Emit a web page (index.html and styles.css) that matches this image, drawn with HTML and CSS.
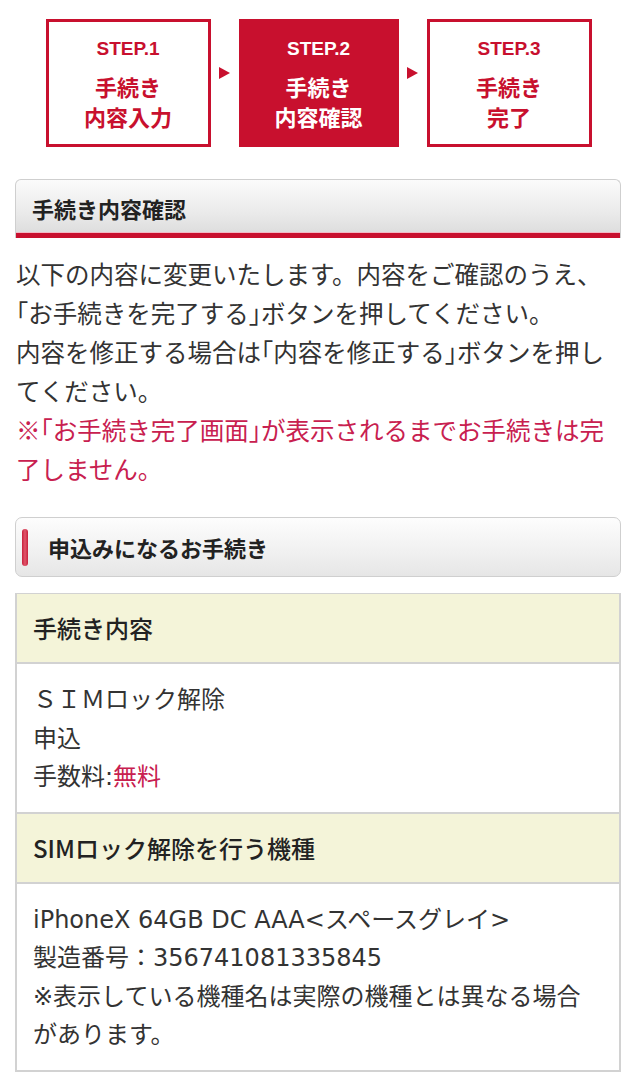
FILE: index.html
```html
<!DOCTYPE html>
<html lang="ja">
<head>
<meta charset="utf-8">
<link rel="stylesheet" href="styles.css">
</head>
<body>
<div class="steps">
  <div class="step">
    <div class="step-no">STEP.1</div>
    <div class="step-label">手続き<br>内容入力</div>
  </div>
  <div class="arrow"></div>
  <div class="step active">
    <div class="step-no">STEP.2</div>
    <div class="step-label">手続き<br>内容確認</div>
  </div>
  <div class="arrow"></div>
  <div class="step">
    <div class="step-no">STEP.3</div>
    <div class="step-label">手続き<br>完了</div>
  </div>
</div>

<h2 class="title">手続き内容確認</h2>

<p class="lead">以下の内容に変更いたします。内容をご確認のうえ、<span class="hb">「</span>お手続きを完了する<span class="hb">」</span>ボタンを押してください。<br>内容を修正する場合は<span class="hb">「</span>内容を修正する<span class="hb">」</span>ボタンを押してください。<br><span class="red">※<span class="hb">「</span>お手続き完了画面<span class="hb">」</span>が表示されるまでお手続きは完了しません。</span></p>

<h3 class="subtitle"><span class="bar"></span>申込みになるお手続き</h3>

<div class="table">
  <div class="th">手続き内容</div>
  <div class="td">ＳＩＭロック解除<br>申込<br>手数料:<span class="red">無料</span></div>
  <div class="th">SIMロック解除を行う機種</div>
  <div class="td">iPhoneX 64GB DC AAA&lt;スペースグレイ&gt;<br>製造番号：356741081335845<br>※表示している機種名は実際の機種とは異なる場合があります。</div>
</div>
</body>
</html>
```

FILE: styles.css
```css
* { box-sizing: border-box; }
body {
  margin: 0;
  background: #fff;
  color: #333;
  font-family: "Noto Sans CJK JP", "Noto Sans", sans-serif;
}
.steps {
  display: flex;
  justify-content: center;
  align-items: center;
  padding-top: 19px;
}
.step {
  width: 165px;
  height: 128px;
  border: 3px solid #c8102e;
  color: #c8102e;
  text-align: center;
  display: flex;
  flex-direction: column;
  align-items: center;
  padding-top: 16px;
}
.step.active {
  background: #c8102e;
  color: #fff;
  width: 160px;
}
.step-no {
  font-family: "Liberation Sans", Arial, sans-serif;
  font-weight: 700;
  font-size: 19px;
  line-height: 22px;
}
.step-label {
  font-weight: 700;
  font-size: 22px;
  line-height: 30px;
  margin-top: 11px;
}
.arrow {
  width: 28px;
  height: 12px;
  position: relative;
  margin-top: -20px;
}
.arrow::before {
  content: "";
  position: absolute;
  left: 8px;
  top: 0;
  border-left: 11px solid #c8102e;
  border-top: 6px solid transparent;
  border-bottom: 6px solid transparent;
}
.title {
  margin: 32px 16px 0 15px;
  height: 59px;
  border: 1px solid #cfcfcf;
  border-bottom: none;
  border-radius: 6px 6px 0 0;
  background: linear-gradient(#fbfbfb, #e9e9e9 60%, #dadada);
  box-shadow: inset 0 -5px 0 #c8102e, inset 0 -6px 0 #f3b9c4;
  font-size: 22px;
  font-weight: 700;
  color: #222;
  line-height: 26px;
  padding: 15px 0 0 16px;
}
.lead {
  margin: 16px 16px 0 16px;
  font-size: 24.5px;
  line-height: 39px;
  color: #333;
}
.hb { font-feature-settings: "halt"; }
.red { color: #c8204f; }
.subtitle {
  margin: 29px 16px 0 15px;
  height: 60px;
  border: 1px solid #cfcfcf;
  border-radius: 7px;
  background: linear-gradient(#fdfdfd, #f0f0f0 60%, #e6e6e6);
  font-size: 22px;
  font-weight: 700;
  color: #222;
  display: flex;
  align-items: center;
  padding-left: 6px;
  gap: 20px;
}
.bar {
  width: 6px;
  height: 37px;
  border-radius: 3px;
  background: linear-gradient(90deg, #c8203c, #e0566b, #c8203c);
}
.table {
  margin: 16px 16px 0 15px;
  border: 2px solid #d2d2d2;
  border-top-width: 1px;
  font-family: "DejaVu Sans", "Noto Sans CJK JP", sans-serif;
}
.th {
  background: #f4f4d9;
  font-size: 24px;
  font-weight: 500;
  color: #222;
  line-height: 36px;
  padding: 16px;
  border-bottom: 2px solid #d2d2d2;
  font-family: "Noto Sans CJK JP", sans-serif;
}
.td {
  font-size: 24px;
  line-height: 38.5px;
  color: #333;
  padding: 17px 16px 15px;
  border-bottom: 2px solid #d2d2d2;
}
.td:last-child { border-bottom: none; }
```
